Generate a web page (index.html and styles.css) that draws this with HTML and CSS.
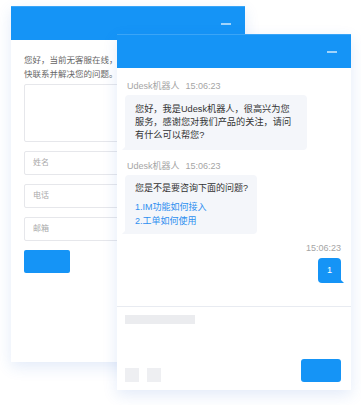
FILE: index.html
```html
<!DOCTYPE html>
<html lang="zh-CN">
<head>
  <meta charset="UTF-8">
  <meta name="viewport" content="width=device-width, initial-scale=1.0">
  <title>Udesk 在线客服</title>
  <link rel="stylesheet" href="styles.css">
</head>
<body>
  <div class="stage">
    <!-- 留言窗口（后面） -->
    <div class="window window-back">
      <div class="win-header"><span class="min-btn"></span></div>
      <div class="leave-msg">
        <p class="leave-tip">您好，当前无客服在线，请留下您的联系方式，我们会尽<br>快联系并解决您的问题。</p>
        <div class="field field-area"></div>
        <div class="field">姓名</div>
        <div class="field">电话</div>
        <div class="field">邮箱</div>
        <button class="btn-blue btn-submit"></button>
      </div>
    </div>

    <!-- 聊天窗口（前面） -->
    <div class="window window-front">
      <div class="win-header"><span class="min-btn"></span></div>
      <div class="chat-list">
        <div class="msg-meta">Udesk机器人<span class="msg-time">15:06:23</span></div>
        <div class="bubble bubble-left">您好，我是Udesk机器人，很高兴为您服务，感谢您对我们产品的关注，请问有什么可以帮您?</div>

        <div class="msg-meta">Udesk机器人<span class="msg-time">15:06:23</span></div>
        <div class="bubble bubble-left bubble-q">
          <p>您是不是要咨询下面的问题?</p>
          <a class="q-link">1.IM功能如何接入</a>
          <a class="q-link">2.工单如何使用</a>
        </div>

        <div class="msg-meta msg-meta-right">15:06:23</div>
        <div class="bubble bubble-right">1</div>
      </div>
      <div class="chat-input">
        <div class="input-bar"></div>
        <div class="tool-row">
          <span class="tool"></span>
          <span class="tool"></span>
          <button class="btn-blue btn-send"></button>
        </div>
      </div>
    </div>
  </div>
</body>
</html>
```

FILE: styles.css
```css
/* Reset */
* {
  margin: 0;
  padding: 0;
  box-sizing: border-box;
  font-family: "Liberation Sans", "Noto Sans CJK SC", sans-serif;
}

body {
  background-color: #fff;
  width: 361px;
  height: 405px;
  overflow: hidden;
}

/* Khung chứa hai cửa sổ */
.stage {
  position: relative;
  width: 361px;
  height: 405px;
}

.window {
  position: absolute;
  width: 234px;
  height: 356px;
  background-color: #fff;
  box-shadow: 0 5px 14px rgba(40, 100, 210, 0.13);
  display: flex;
  flex-direction: column;
}

.window-back {
  left: 11px;
  top: 6px;
}

.window-front {
  left: 117px;
  top: 34px;
}

/* Header */
.win-header {
  height: 34px;
  flex-shrink: 0;
  background-color: #1594f6;
  border-top: 1px solid #3aa5f7;
  display: flex;
  justify-content: flex-end;
  align-items: center;
  padding-right: 14px;
}

.min-btn {
  width: 10px;
  height: 2px;
  background-color: rgba(255, 255, 255, 0.6);
}

/* Form để lại lời nhắn */
.leave-msg {
  padding: 13px 13px 0;
  display: flex;
  flex-direction: column;
}

.leave-tip {
  font-size: 8.5px;
  line-height: 14px;
  color: #666;
  white-space: nowrap;
  margin-bottom: 3px;
}

.field {
  height: 24px;
  border: 1px solid #e6e7eb;
  border-radius: 2px;
  font-size: 8px;
  line-height: 22px;
  color: #aaa;
  padding-left: 8px;
  margin-bottom: 9px;
}

.field-area {
  height: 58px;
}

.btn-blue {
  border: none;
  background-color: #1594f6;
  border-radius: 2px;
  cursor: pointer;
}

.btn-submit {
  width: 46px;
  height: 23px;
}

/* Danh sách tin nhắn */
.chat-list {
  flex: 1;
  padding: 12px 10px 0 8px;
  display: flex;
  flex-direction: column;
  align-items: flex-start;
}

.msg-meta {
  font-size: 9px;
  line-height: 12px;
  color: #a5a5a5;
  margin-left: 2px;
  margin-bottom: 3px;
}

.msg-time {
  margin-left: 6px;
}

.msg-meta-right {
  align-self: flex-end;
  margin-top: 8px;
  margin-bottom: 4px;
}

.bubble {
  position: relative;
  background-color: #f4f6fa;
  border-radius: 4px;
  font-size: 9.2px;
  line-height: 13px;
  color: #333;
}

.bubble-left {
  width: 182px;
  padding: 8px 10px;
  margin-bottom: 10px;
  border-bottom-left-radius: 0;
}

.bubble-left::before {
  content: "";
  position: absolute;
  left: -3px;
  bottom: 0;
  border-style: solid;
  border-width: 0 0 4px 4px;
  border-color: transparent transparent #f4f6fa transparent;
}

.bubble-q {
  width: auto;
  padding: 7px 9px 6px 10px;
  margin-bottom: 0;
  font-size: 9px;
}

.bubble-q p {
  white-space: nowrap;
  margin-bottom: 5px;
}

.q-link {
  display: block;
  color: #2e8ff0;
  line-height: 14px;
  cursor: pointer;
}

.bubble-right {
  align-self: flex-end;
  width: 23px;
  height: 25px;
  background-color: #1594f6;
  color: #fff;
  text-align: center;
  line-height: 25px;
  border-bottom-right-radius: 0;
}

.bubble-right::after {
  content: "";
  position: absolute;
  right: -3px;
  bottom: 0;
  border-style: solid;
  border-width: 4px 0 0 4px;
  border-color: transparent transparent transparent #1594f6;
}

/* Ô nhập tin nhắn */
.chat-input {
  height: 84px;
  flex-shrink: 0;
  border-top: 1px solid #e8ebf1;
  padding: 8px 10px 8px 8px;
  display: flex;
  flex-direction: column;
  justify-content: space-between;
}

.input-bar {
  width: 70px;
  height: 9px;
  background-color: #ebecef;
}

.tool-row {
  display: flex;
  align-items: flex-end;
  gap: 8px;
}

.tool {
  width: 14px;
  height: 14px;
  background-color: #eeeff2;
}

.btn-send {
  margin-left: auto;
  width: 40px;
  height: 23px;
  border-radius: 3px;
}
```
